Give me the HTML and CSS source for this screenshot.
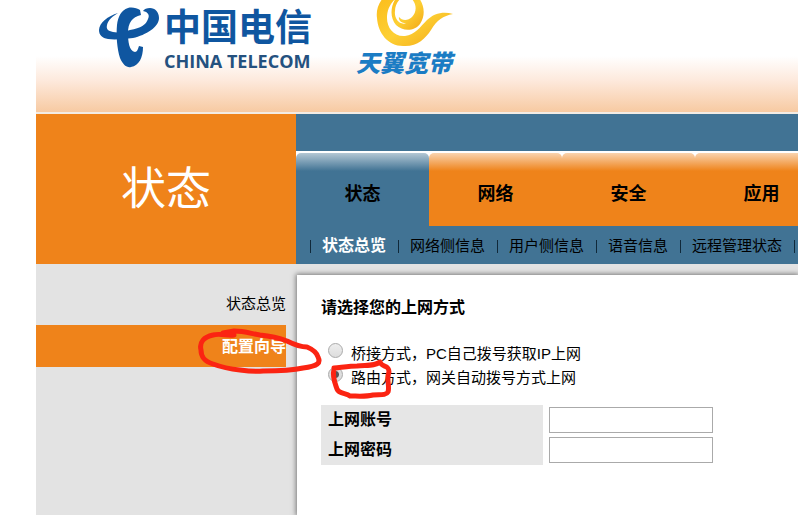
FILE: index.html
```
<!DOCTYPE html>
<html lang="zh-CN">
<head>
    <meta charset="UTF-8">
    <title>中国电信 天翼宽带</title>
    <meta name="viewport" content="width=device-width, initial-scale=1.0">
    <link rel="stylesheet" href="styles.css">
</head>
<body>
    <div class="page">
        <header class="header">
            <div class="telecom">
                <svg class="telecom-mark" viewBox="0 0 62 62" width="62" height="62" aria-hidden="true">
                    <path fill="#0f56a0" d="M20 6C10 9 1 16 1 23C1 28 4 31 10 32C17 33 26 32 35 31C48 28 61 20 61 11C61 5 57 1 52 1C49 1 46 2 45 4C50 5 52 8 50 12C48 18 43 21 32 23C26 25 20 26 15 25C10 24 8 22 9 18C10 13 15 9 20 6Z"/>
                    <path fill="#0f56a0" d="M42 3C39 1 34 0 30 1C23 3 20 10 19 18C18 28 19 42 22 51C25 58 29 61 33 60C41 59 45 50 45 40L41 39C40 42 39 45 37 45C31 44 30 34 30 26C30 16 34 10 43 8Z"/>
                </svg>
                <div class="telecom-text">
                    <div class="telecom-cn">中国电信</div>
                    <div class="telecom-en">CHINA TELECOM</div>
                </div>
            </div>
            <div class="broadband">
                <svg class="broadband-mark" viewBox="0 0 78 47" width="78" height="47" aria-hidden="true">
                    <defs>
                        <linearGradient id="gold" x1="0" y1="0" x2="1" y2="1">
                            <stop offset="0" stop-color="#fbbd1c"/>
                            <stop offset="0.5" stop-color="#fdd034"/>
                            <stop offset="1" stop-color="#f2a614"/>
                        </linearGradient>
                    </defs>
                    <path fill="url(#gold)" d="M7-2C2 4 0 11 1 18C2 33 12 46 27 46C41 47 49 39 55 30C61 20 67 16 77 14C68 11 58 13 51 20C44 27 39 35 29 36C18 37 11 28 11 18C11 10 14 4 20-2Z"/>
                    <path fill="url(#gold)" d="M20-2C14 7 14 18 20 25C27 32 39 31 44 24C50 15 48 5 43-2L35-2C41 4 41 12 36 17C32 21 26 21 23 17C22 21 27 24 31 23C23 26 18 18 19 11C19 6 21 2 25-2Z"/>
                </svg>
                <div class="broadband-text">天翼宽带</div>
            </div>
        </header>

        <div class="top">
            <h1 class="section-title">状态</h1>
            <nav class="nav">
                <div class="tabs">
                    <a href="#" class="tab active">状态</a>
                    <a href="#" class="tab">网络</a>
                    <a href="#" class="tab">安全</a>
                    <a href="#" class="tab">应用</a>
                </div>
                <ul class="subnav">
                    <li><a href="#" class="current">状态总览</a></li>
                    <li><a href="#">网络侧信息</a></li>
                    <li><a href="#">用户侧信息</a></li>
                    <li><a href="#">语音信息</a></li>
                    <li><a href="#">远程管理状态</a></li>
                    <li></li>
                </ul>
            </nav>
        </div>

        <div class="main">
            <nav class="sidebar">
                <a href="#">状态总览</a>
                <a href="#" class="selected">配置向导</a>
            </nav>
            <form class="content">
                <h2>请选择您的上网方式</h2>
                <div class="option">
                    <input type="radio" name="mode" id="bridge">
                    <label for="bridge">桥接方式，PC自己拨号获取IP上网</label>
                </div>
                <div class="option">
                    <input type="radio" name="mode" id="route" checked>
                    <label for="route">路由方式，网关自动拨号方式上网</label>
                </div>
                <div class="fields">
                    <div class="field">
                        <label for="account">上网账号</label>
                        <input type="text" id="account">
                    </div>
                    <div class="field">
                        <label for="password">上网密码</label>
                        <input type="password" id="password">
                    </div>
                </div>
            </form>
        </div>

        <!-- hand-drawn marks over the menu item and the option -->
        <svg class="marks" viewBox="0 0 798 515" width="798" height="515" aria-hidden="true">
            <path d="M223 333L234 331C245 331 252 334 260 335C270 336 279 338 287 341C295 345 300 347 307 347C314 350 317 353 318 357C321 363 318 366 303 368C290 371 277 371 263 371C255 372 247 371 240 370C230 369 221 367 213 364C204 361 201 357 201 350C199 342 204 337 213 335C220 333 227 336 234 335"/>
            <path d="M334 368C344 367 351 366 357 366C368 365 375 366 380 362C382 368 389 364 389 372C386 379 390 386 388 392C386 396 378 394 373 395C365 397 357 396 350 396C346 393 339 394 337 389C335 383 332 377 334 369"/>
        </svg>
    </div>
</body>
</html>
```
FILE: styles.css
```
* {
    box-sizing: border-box;
}
body {
    margin: 0;
    background: #fff;
    color: #000;
    font-family: "Liberation Sans", "Noto Sans CJK SC", sans-serif;
    font-size: 15px;
    overflow-x: hidden;
}
a {
    color: inherit;
    text-decoration: none;
}
.page {
    position: relative;
    display: flex;
    flex-direction: column;
    min-height: 100vh;
    padding-left: 36px;
    overflow: hidden;
}

/* header */
.header {
    display: flex;
    gap: 40px;
    height: 114px;
    padding-left: 62px;
    background: linear-gradient(#fff 50%, #fde9dc 72%, #f7caa2 100%);
    border-bottom: 2px solid #f3ece4;
}
.telecom {
    display: flex;
    gap: 4px;
    padding-top: 7px;
}
.telecom-text {
    width: 152px;
    color: #0f56a0;
    white-space: nowrap;
}
.telecom-cn {
    font-size: 37px;
    font-weight: 700;
    line-height: 44px;
}
.telecom-en {
    font-family: "Open Sans", sans-serif;
    font-size: 18px;
    font-weight: 700;
    line-height: 20px;
    color: #24517f;
}
.broadband {
    width: 100px;
    white-space: nowrap;
}
.broadband-mark {
    display: block;
    margin-left: 20px;
}
.broadband-text {
    font-size: 24px;
    font-weight: 900;
    font-style: italic;
    line-height: 34px;
    color: #1b7cc4;
}

/* top navigation */
.top {
    display: flex;
    height: 150px;
}
.section-title {
    flex: none;
    width: 260px;
    margin: 0;
    background: #ef831a;
    color: #fff;
    font-size: 45px;
    font-weight: 400;
    line-height: 152px;
    text-align: center;
}
.nav {
    flex: 1;
    min-width: 0;
    padding-top: 37px;
    background: #417394;
    overflow: hidden;
}
.tabs {
    display: flex;
    background: #fff;
    padding-top: 2px;
}
.tab {
    flex: none;
    width: 133px;
    height: 73px;
    border-radius: 5px 5px 0 0;
    background: linear-gradient(#f9d3ae, #ef831a 18px);
    font-size: 18px;
    font-weight: 700;
    line-height: 82px;
    text-align: center;
}
.tab.active {
    background: linear-gradient(#b3c7d4, #417394 18px);
}
.subnav {
    display: flex;
    margin: 0;
    padding: 0 0 0 14px;
    list-style: none;
    line-height: 40px;
    white-space: nowrap;
}
.subnav li {
    display: flex;
    align-items: center;
}
.subnav li::before {
    content: "";
    width: 1px;
    height: 13px;
    margin-right: 11px;
    background: #10293a;
}
.subnav a {
    margin-right: 12px;
}
.subnav .current {
    color: #fff;
    font-size: 16px;
    font-weight: 700;
}

/* body */
.main {
    flex: 1;
    display: flex;
    background: #e3e3e3;
}
.sidebar {
    flex: none;
    width: 261px;
    padding: 19px 11px 0 0;
}
.sidebar a {
    display: block;
    height: 42px;
    line-height: 42px;
    text-align: right;
}
.sidebar .selected {
    background: #ef831a;
    color: #fff;
    font-size: 16px;
    font-weight: 700;
    line-height: 44px;
}
.content {
    flex: 1;
    min-width: 0;
    margin-top: 11px;
    padding: 21px 24px;
    background: #fff;
    box-shadow: 0 0 5px 1px #777;
}
.content h2 {
    margin: 0 0 22px;
    font-size: 16px;
    line-height: 24px;
}
.option {
    display: flex;
    height: 24px;
    gap: 8px;
    line-height: 24px;
}
.option input {
    appearance: none;
    width: 15px;
    height: 15px;
    margin: 1px 0 0 7px;
    border: 1px solid #aaa;
    border-radius: 50%;
    background: linear-gradient(#eee, #ddd);
}
.option input:checked {
    background: radial-gradient(#555 3px, #ddd 4px);
}
.fields {
    margin-top: 15px;
}
.field {
    display: flex;
    align-items: center;
    gap: 6px;
    height: 30px;
}
.field label {
    width: 222px;
    padding-left: 7px;
    background: #e6e6e6;
    font-size: 16px;
    font-weight: 700;
    line-height: 30px;
}
.field input {
    width: 164px;
    height: 26px;
    border: 1px solid #aaa;
    background: #fff;
}

.marks {
    position: absolute;
    left: 0;
    top: 0;
    fill: none;
    stroke: #fb2412;
    stroke-width: 5;
    stroke-linecap: round;
    stroke-linejoin: round;
    pointer-events: none;
}
```
